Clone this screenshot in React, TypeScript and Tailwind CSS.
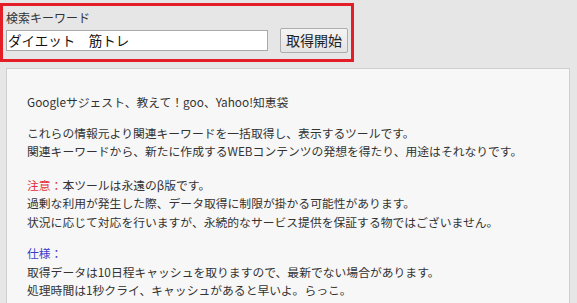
import React from "react";

export default function App() {
  const font = { fontFamily: '"Noto Sans CJK JP", "Noto Sans", sans-serif' };
  return (
    <div className="w-[577px] h-[303px] overflow-hidden bg-[#e6e6e6] text-[#333]" style={font}>
      <div className="mt-[3px] w-[354px] h-[59px] border-[3px] border-[#e41e26] pl-[3px] pt-[5px]">
        <div className="text-[12px] leading-[14px] text-[#333]">検索キーワード</div>
        <div className="flex items-center mt-[3px]">
          <div className="w-[262px] h-[21px] bg-white border border-[#a9a9a9] flex items-center pl-[1px] text-[13.5px] text-[#111]">
            ダイエット　筋トレ
          </div>
          <button className="ml-[12px] w-[68px] h-[25px] border border-[#adadad] rounded-[2px] bg-gradient-to-b from-[#f4f4f4] to-[#e4e4e4] text-[14px] text-[#222] flex items-center justify-center">
            取得開始
          </button>
        </div>
      </div>
      <div className="mt-[6px] ml-[6px] w-[564px] h-[240px] border border-[#cfcfcf] bg-[#f7f7f7] pl-[20px] pt-[24px] text-[11.8px] leading-[18.5px] text-[#333]">
        <p>Googleサジェスト、教えて！goo、Yahoo!知恵袋</p>
        <p className="mt-[12px]">
          これらの情報元より関連キーワードを一括取得し、表示するツールです。
          <br />
          関連キーワードから、新たに作成するWEBコンテンツの発想を得たり、用途はそれなりです。
        </p>
        <p className="mt-[15px]">
          <span className="text-[#e0323c]">注意：</span>本ツールは永遠のβ版です。
          <br />
          過剰な利用が発生した際、データ取得に制限が掛かる可能性があります。
          <br />
          状況に応じて対応を行いますが、永続的なサービス提供を保証する物ではございません。
        </p>
        <p className="mt-[13px]">
          <span className="text-[#3c3cc8]">仕様：</span>
          <br />
          取得データは10日程キャッシュを取りますので、最新でない場合があります。
          <br />
          処理時間は1秒クライ、キャッシュがあると早いよ。らっこ。
        </p>
      </div>
    </div>
  );
}
